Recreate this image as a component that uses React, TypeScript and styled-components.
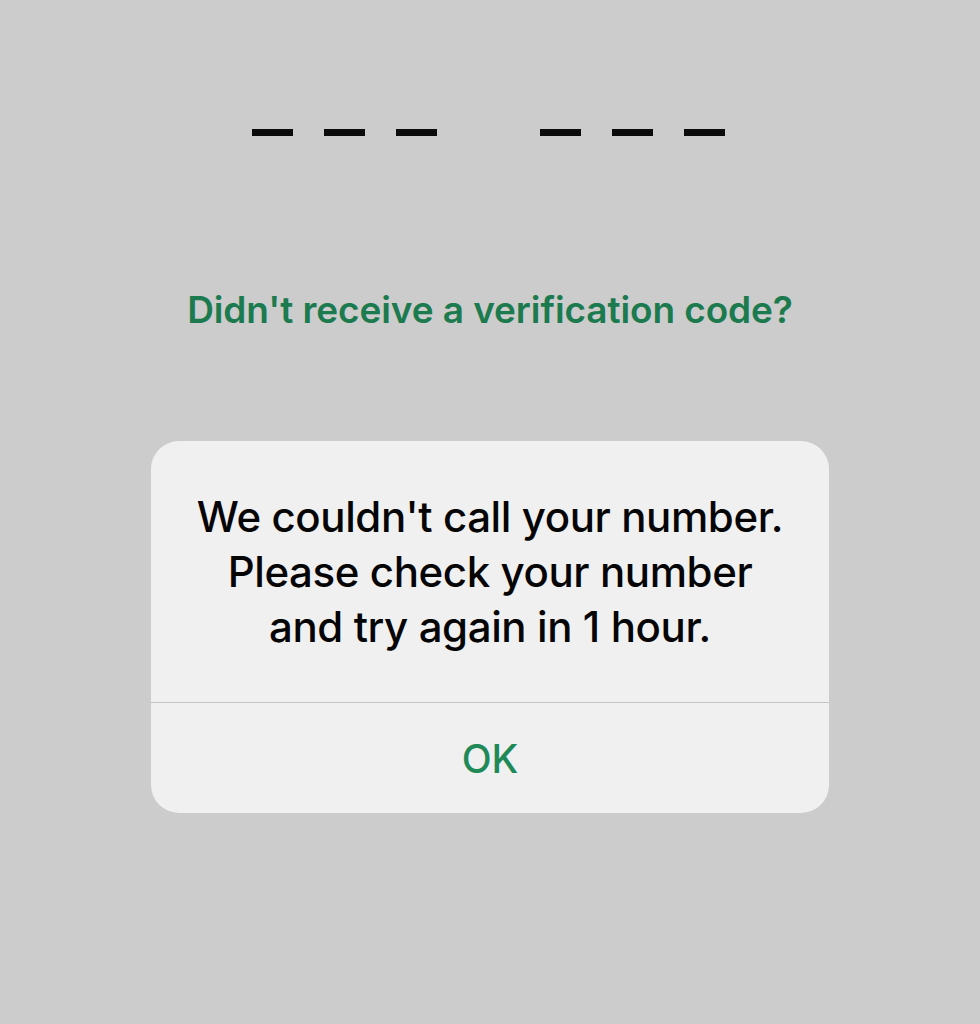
import React from "react";
import styled, { createGlobalStyle } from "styled-components";

const GlobalStyle = createGlobalStyle`
  html, body {
    margin: 0;
    padding: 0;
    background: #cccccc;
  }
  body {
    font-family: Inter, "Noto Sans", "Liberation Sans", sans-serif;
    -webkit-font-smoothing: antialiased;
  }
`;

const Screen = styled.div`
  width: 980px;
  height: 1024px;
  background: #cccccc;
  display: flex;
  flex-direction: column;
  align-items: center;
  overflow: hidden;
`;

// six-digit code slots, split 3 + 3
const CodeRow = styled.div`
  display: flex;
  align-items: center;
  gap: 103px;
  margin-top: 129px;
  margin-left: -4px;
`;

const CodeGroup = styled.div`
  display: flex;
  gap: 31px;
`;

const Slot = styled.div`
  width: 41px;
  height: 7px;
  background: #0b0b0b;
`;

const ResendLink = styled.button`
  margin-top: 151px;
  padding: 0;
  border: none;
  background: none;
  font-family: inherit;
  font-size: 37px;
  font-weight: 600;
  color: #1c7a4f;
  letter-spacing: -0.1px;
  cursor: pointer;
`;

const Alert = styled.div`
  margin-top: 109px;
  width: 678px;
  background: #f0f0f0;
  border-radius: 28px;
  display: flex;
  flex-direction: column;
  overflow: hidden;
`;

const Message = styled.div`
  padding: 48px 30px 48px;
  text-align: center;
  font-size: 42px;
  font-weight: 500;
  line-height: 55px;
  color: #050505;
  letter-spacing: -0.4px;
`;

const Divider = styled.div`
  height: 1px;
  background: #c4c4c4;
`;

const ActionButton = styled.button`
  height: 110px;
  border: none;
  background: none;
  font-family: inherit;
  font-size: 39px;
  font-weight: 500;
  color: #1f8a58;
  cursor: pointer;
`;

export default function App() {
  const code = ["", "", "", "", "", ""];
  return (
    <>
      <GlobalStyle />
      <Screen>
        <CodeRow>
          <CodeGroup>
            {code.slice(0, 3).map((_, i) => (
              <Slot key={i} />
            ))}
          </CodeGroup>
          <CodeGroup>
            {code.slice(3).map((_, i) => (
              <Slot key={i} />
            ))}
          </CodeGroup>
        </CodeRow>
        <ResendLink>Didn't receive a verification code?</ResendLink>
        <Alert>
          <Message>
            We couldn't call your number.
            <br />
            Please check your number
            <br />
            and try again in 1 hour.
          </Message>
          <Divider />
          <ActionButton>OK</ActionButton>
        </Alert>
      </Screen>
    </>
  );
}
